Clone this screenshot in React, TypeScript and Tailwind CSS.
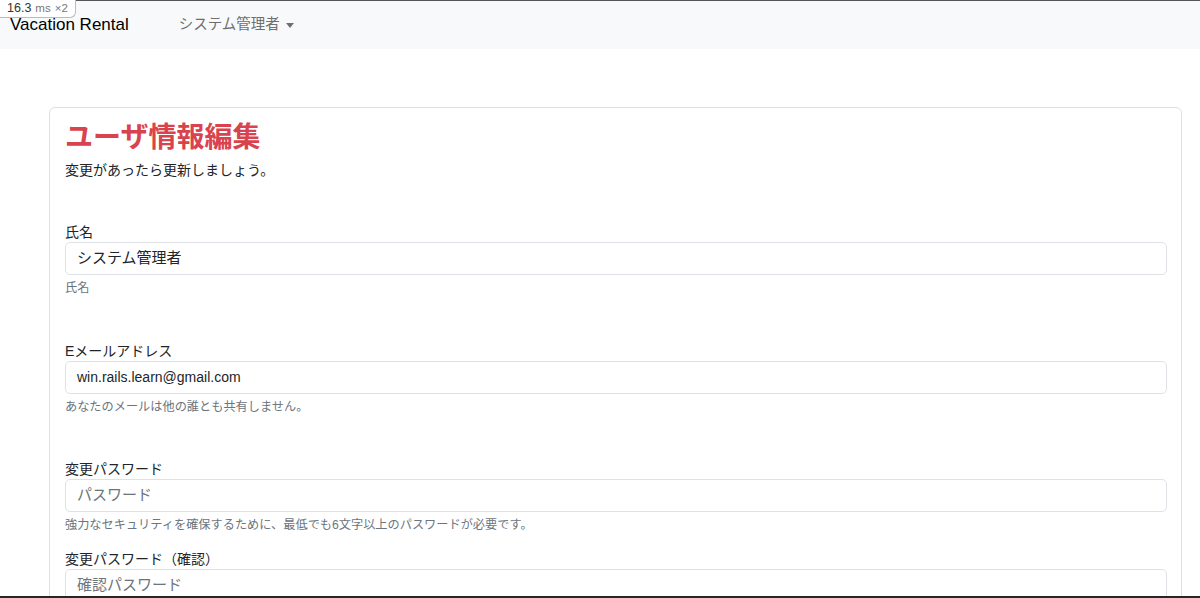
import React from "react";

const font = { fontFamily: '"Liberation Sans", "Noto Sans CJK JP", sans-serif' };

function Field({
  label,
  value,
  placeholder,
  help,
  gapAfter,
  valueClass = "text-[15px]",
}: {
  label: string;
  value?: string;
  placeholder?: string;
  help?: string;
  gapAfter: string;
  valueClass?: string;
}) {
  return (
    <div className={gapAfter}>
      <div className="text-[14px] leading-[19px] text-[#212529]">{label}</div>
      <div className="h-[33px] rounded-[5px] border border-[#dee2e6] bg-white px-[11px] flex items-center">
        {value ? (
          <span className={`${valueClass} text-[#212529]`}>{value}</span>
        ) : (
          <span className="text-[15px] text-[#6c757d]">{placeholder}</span>
        )}
      </div>
      {help && (
        <div className="mt-[4px] text-[12.2px] leading-[18px] text-[#6c757d]">{help}</div>
      )}
    </div>
  );
}

export default function App() {
  return (
    <div className="relative h-[598px] overflow-hidden bg-white" style={font}>
      <div className="h-[1px] bg-[#555]" />
      <nav className="h-[48px] bg-[#f8f9fa] flex items-center">
        <span className="ml-[10px] text-[17px] text-black">Vacation Rental</span>
        <span className="ml-[50px] flex items-center text-[14.5px] text-[#6f6f6f]">
          システム管理者
          <span className="ml-[6px] inline-block w-0 h-0 border-l-[4px] border-r-[4px] border-t-[5px] border-l-transparent border-r-transparent border-t-[#6f6f6f]" />
        </span>
      </nav>

      <div className="mt-[58px] ml-[49px] w-[1133px] rounded-[6px] border border-[#dfdfdf] pl-[15px] pr-[14px] pt-[13px]">
        <h1 className="text-[28px] leading-[34px] font-bold text-[#d9434d]">ユーザ情報編集</h1>
        <p className="mt-[5px] text-[14px] leading-[20px] text-[#212529]">変更があったら更新しましょう。</p>
        <div className="mt-[43px]">
          <Field label="氏名" value="システム管理者" help="氏名" gapAfter="mb-[45px]" />
          <Field
            label="Eメールアドレス"
            value="win.rails.learn@gmail.com"
            valueClass="text-[14px]"
            help="あなたのメールは他の誰とも共有しません。"
            gapAfter="mb-[44px]"
          />
          <Field
            label="変更パスワード"
            placeholder="パスワード"
            help="強力なセキュリティを確保するために、最低でも6文字以上のパスワードが必要です。"
            gapAfter="mb-[16px]"
          />
          <Field label="変更パスワード（確認）" placeholder="確認パスワード" gapAfter="mb-[40px]" />
        </div>
      </div>

      <div className="absolute left-0 top-0 h-[18px] pl-[7px] pr-[7px] flex items-center gap-[4px] bg-white border-r border-b border-[#bbb] rounded-br-[6px]">
        <span className="text-[12.5px] text-[#333]">16.3</span>
        <span className="text-[11.5px] text-[#777]">ms</span>
        <span className="text-[11.5px] text-[#777]">×2</span>
      </div>
      <div className="absolute left-0 right-0 bottom-0 h-[2px] bg-[#2a2522]" />
    </div>
  );
}
